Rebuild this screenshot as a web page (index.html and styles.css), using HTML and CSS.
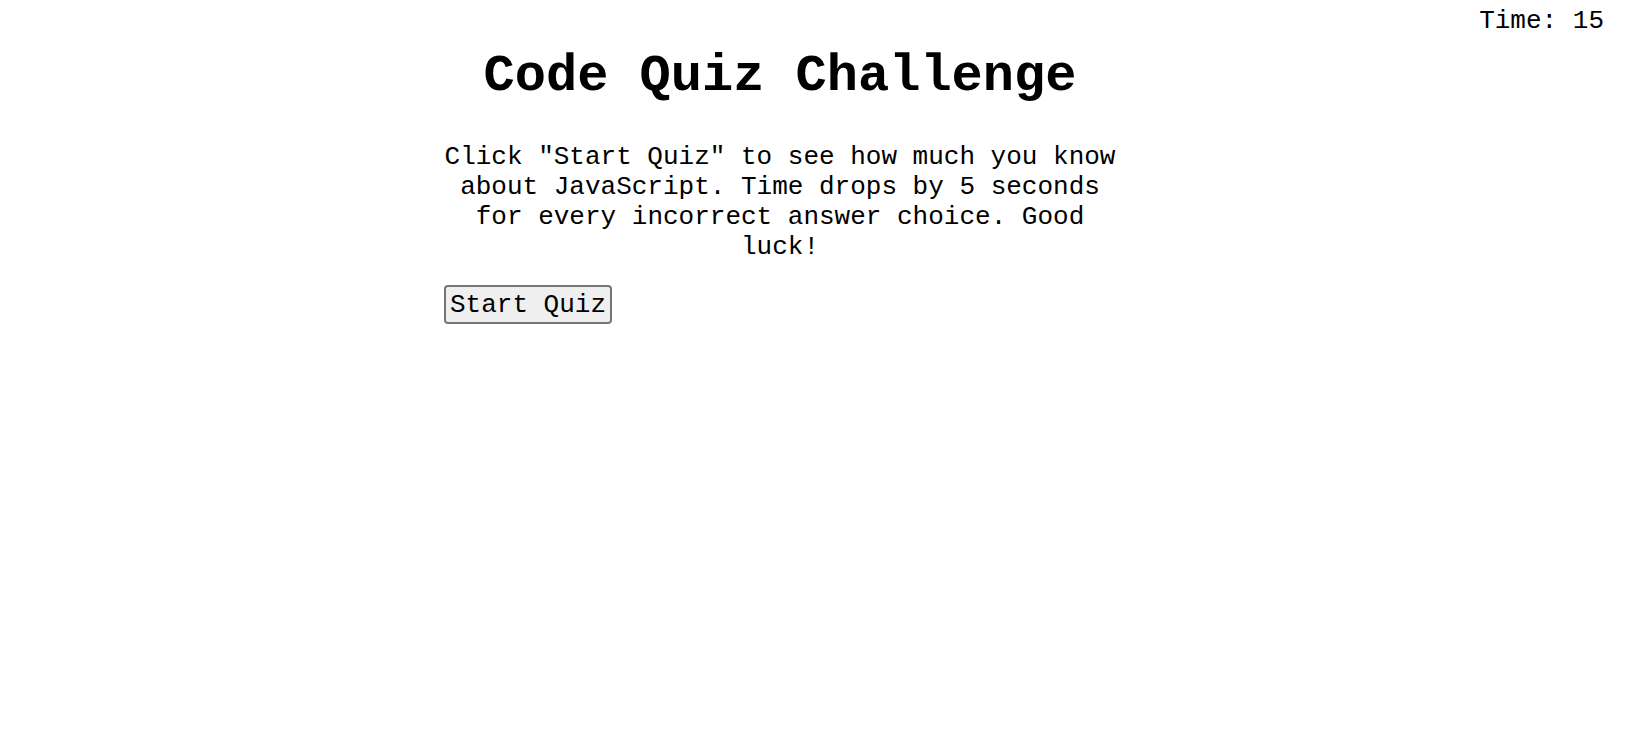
FILE: index.html
```html
<!DOCTYPE html>
<html lang="en">
<head>
<meta charset="utf-8">
<title>Code Quiz Challenge</title>
<link rel="stylesheet" href="styles.css">
</head>
<body>
<header class="topbar">
  <div class="timer">Time: <span class="timer-value">15</span></div>
</header>
<main class="quiz">
  <h1 class="quiz-title">Code Quiz Challenge</h1>
  <p class="quiz-intro">Click "Start Quiz" to see how much you know about JavaScript. Time drops by 5 seconds for every incorrect answer choice. Good luck!</p>
  <button class="start-btn" type="button">Start Quiz</button>
</main>
</body>
</html>
```
FILE: styles.css
```css
html, body {
  margin: 0;
  padding: 0;
  background: #ffffff;
}
body {
  font-family: "Liberation Mono", "Courier New", monospace;
  font-size: 26px;
  color: #000000;
}
.topbar {
  display: flex;
  justify-content: flex-end;
  padding: 6px 22px 0 0;
  height: 30px;
}
.timer {
  white-space: pre;
}
.quiz {
  width: 672px;
  margin-left: 444px;
  display: flex;
  flex-direction: column;
  align-items: flex-start;
}
.quiz-title {
  align-self: stretch;
  text-align: center;
  font-size: 52px;
  font-weight: bold;
  margin: 11px 0 36px;
}
.quiz-intro {
  align-self: stretch;
  text-align: center;
  margin: 0 0 23px;
}
.start-btn {
  font-family: inherit;
  font-size: 26px;
  color: #000000;
  background: #efefef;
  border: 2px solid #767676;
  border-radius: 4px;
  padding: 3px 4px 2px;
  line-height: normal;
}
```
